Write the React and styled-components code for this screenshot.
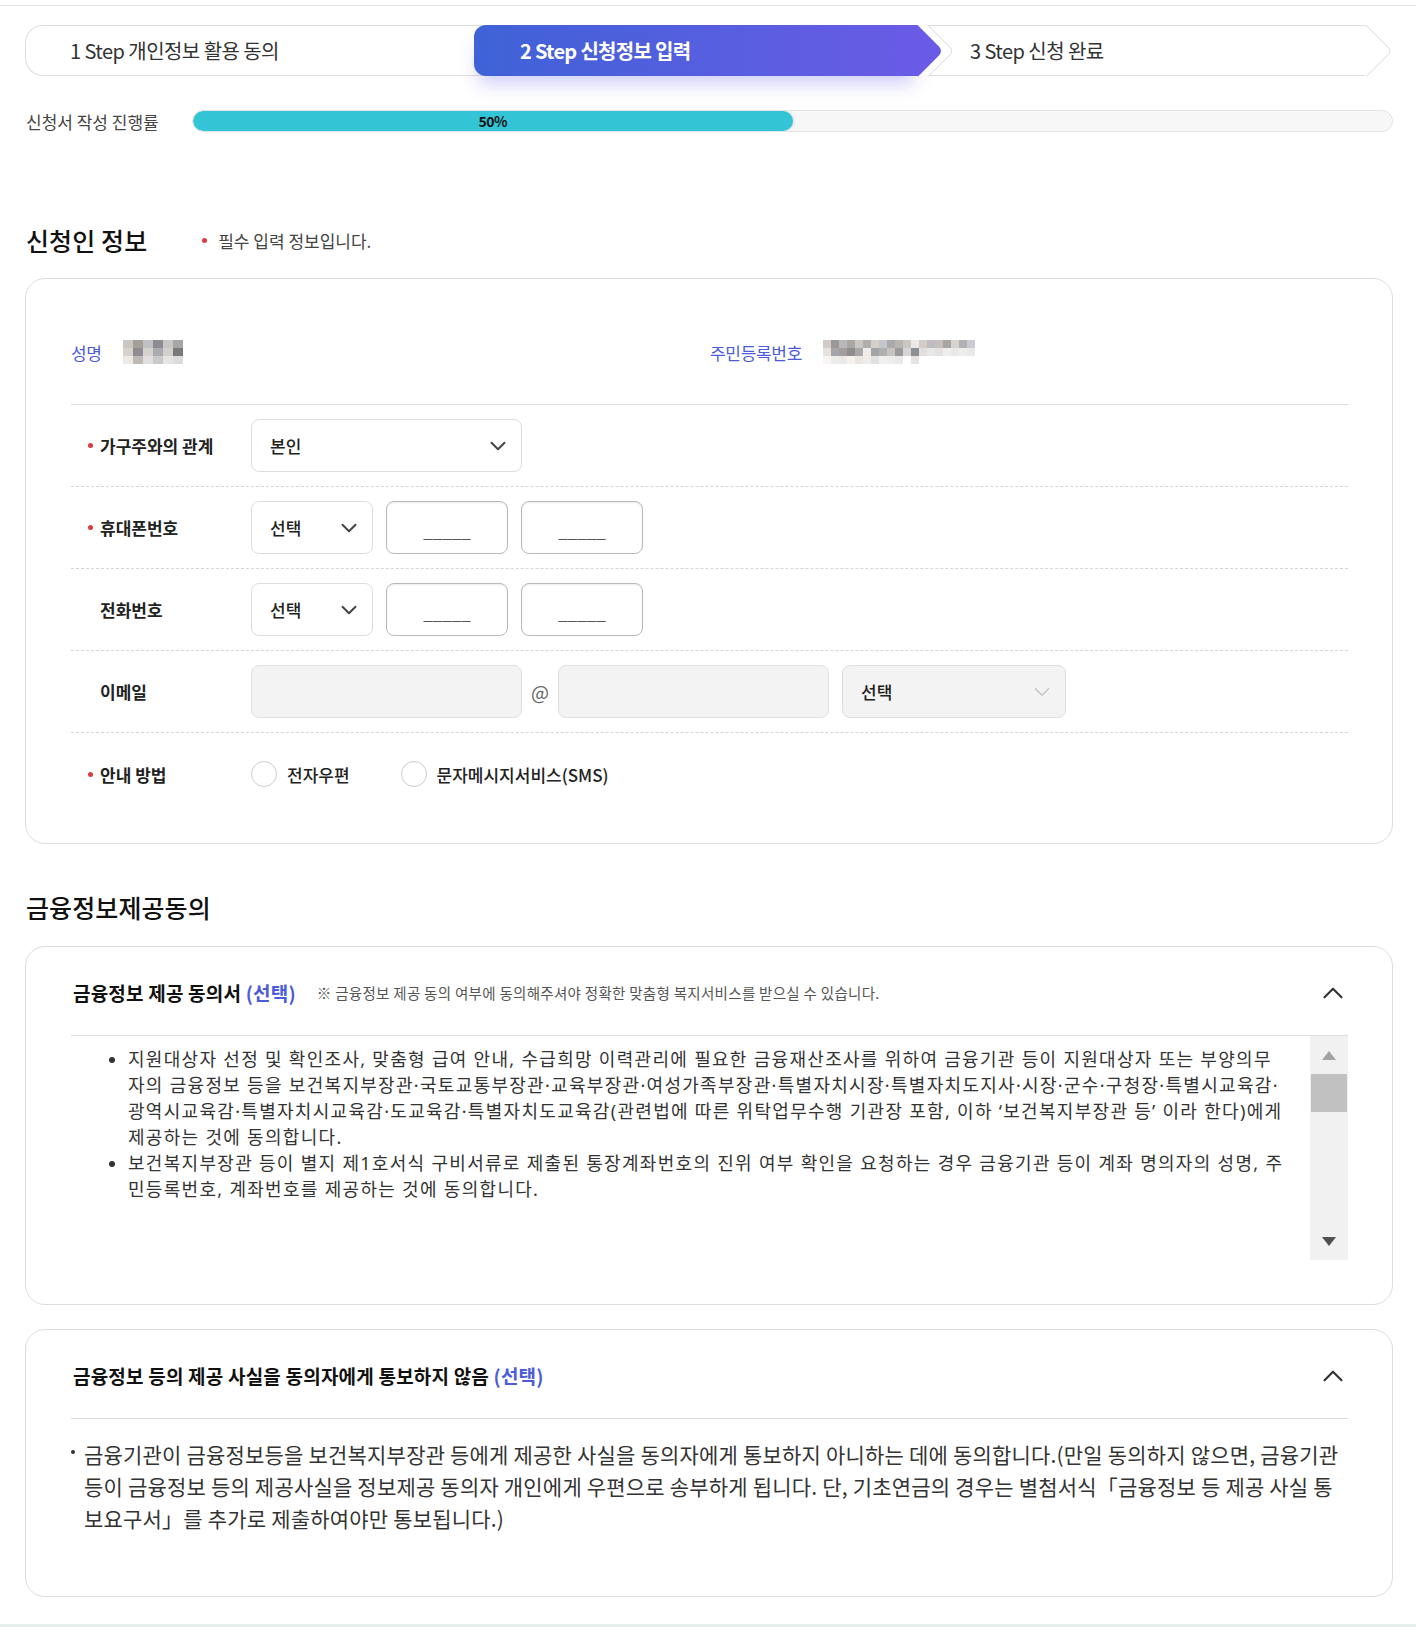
import React from 'react';
import styled, { createGlobalStyle } from 'styled-components';
import { ChevronDown, ChevronUp } from 'lucide-react';

const percent = 50;

const nameCells = [
  ['#cbc6c3', '#a59f9c', '#bfc0c2', '#8d8c90', '#c9c7c6', '#a7a5a6'],
  ['#d8d2cc', '#8f8d8f', '#d5d1cd', '#a9abb0', '#d2cfcc', '#7a7878'],
  ['#ede9e5', '#bdb9b7', '#e2e0de', '#c9c9ca', '#e6e4e2', '#dedcdb'],
];

const idCells = [
  ['#d0cbc6', '#9b9896', '#b9b8b8', '#a8a6a6', '#cbc6c1', '#b0aeae', '#d6d0c8', '#c3c6cc', '#a9a9ab', '#b8b4b0', '#c9c6c3', '#ebe8e6', '#d2ccc6', '#bcbcc2', '#c6c0ba', '#a7a5a5', '#d7d3cf', '#b3b1b2', '#c9cdd3'],
  ['#e6e2de', '#a4a6ab', '#a19e9c', '#8f8d8e', '#a9a7a8', '#efebe6', '#a2a4a8', '#b1afae', '#c7c3bf', '#9c9b9c', '#d8d5d2', '#8d8f93', '#e2dfdc', '#e9e8e8', '#e4e2e0', '#f1efee', '#ebe9e8', '#eeeeee', '#e8e8e8'],
  ['#f8f5f2', '#eeecea', '#ebe9e7', '#f3f2f1', '#e9e6e4', '#efedea', '#e2e1e2', '#f1f0ee', '#efedeb', '#e9e8e8', '#ffffff', '#e6e4e3', '#ffffff', '#ffffff', '#ffffff', '#ffffff', '#ffffff', '#ffffff', '#ffffff'],
];

const GlobalStyle = createGlobalStyle`
  * { box-sizing: border-box; }
  body {
    margin: 0;
    background: #fff;
    font-family: "Noto Sans CJK KR", "Noto Sans", sans-serif;
    color: #222;
  }
`;

const TopRule = styled.div`
  height: 6px;
  border-bottom: 1px solid #e4e4e4;
`;

const Container = styled.main`
  width: 1368px;
  margin-left: 25px;
`;

const StepBar = styled.div`
  display: flex;
  height: 51px;
  margin-top: 19px;
`;

const StepFirst = styled.div`
  flex: 0 0 465px;
  display: flex;
  align-items: center;
  padding-left: 44px;
  border: 1px solid #ddd;
  border-right: none;
  border-radius: 18px 0 0 18px;
  font-size: 20px;
  letter-spacing: -0.55px;
  color: #333;
`;

const StepActive = styled.div`
  position: relative;
  z-index: 2;
  flex: 0 0 444px;
  margin-left: -16px;
  display: flex;
  align-items: center;
  padding-left: 46px;
  border-radius: 12px 0 0 12px;
  background: linear-gradient(90deg, #3f62d7 0%, #6a5be6 100%);
  box-shadow: 0 12px 18px -4px rgba(95, 95, 230, 0.3);
  color: #fff;
  font-size: 20px;
  font-weight: 700;
  letter-spacing: -0.7px;

  &::after {
    content: '';
    position: absolute;
    right: -18px;
    top: 50%;
    width: 36px;
    height: 36px;
    background: #6a5be6;
    border-radius: 0 6px 0 0;
    transform: translateY(-50%) rotate(45deg);
  }
`;

const StepLast = styled.div`
  position: relative;
  z-index: 1;
  flex: 1;
  margin-left: 10px;
  margin-right: 26px;
  display: flex;
  align-items: center;
  padding-left: 42px;
  border-top: 1px solid #ddd;
  border-bottom: 1px solid #ddd;
  background: #fff;
  font-size: 20px;
  letter-spacing: -0.55px;
  color: #333;

  &::before,
  &::after {
    content: '';
    position: absolute;
    top: 50%;
    width: 36px;
    height: 36px;
    background: #fff;
    border-top: 1px solid #ddd;
    border-right: 1px solid #ddd;
    border-radius: 0 6px 0 0;
    transform: translateY(-50%) rotate(45deg);
  }
  &::before { left: -18px; }
  &::after { right: -18px; }
`;

const StepText = styled.span`
  position: relative;
  z-index: 1;
`;

const ProgressRow = styled.div`
  display: flex;
  align-items: center;
  margin-top: 34px;
  height: 22px;
`;

const ProgressLabel = styled.span`
  flex: 0 0 167px;
  padding-left: 1px;
  font-size: 17px;
  color: #444;
  white-space: nowrap;
`;

const ProgressTrack = styled.div`
  flex: 1;
  height: 22px;
  display: flex;
  border: 1px solid #e3e3e3;
  border-radius: 11px;
  background: #f7f7f7;
  overflow: hidden;
`;

const ProgressFill = styled.div`
  display: flex;
  align-items: center;
  justify-content: center;
  border-radius: 11px;
  background: #33c5d6;
  box-shadow: 1px 0 3px rgba(0, 0, 0, 0.12);
  font-size: 14px;
  font-weight: 700;
  letter-spacing: -0.5px;
  color: #111;
`;

const SectionHead = styled.div`
  display: flex;
  align-items: center;
  height: 34px;
  margin-top: ${(p) => p.$top}px;
`;

const SectionTitle = styled.h2`
  margin: 0;
  padding-left: 1px;
  font-size: 25px;
  font-weight: 500;
  letter-spacing: 0.1px;
  line-height: 34px;
  color: #111;
`;

const RequiredNote = styled.span`
  display: flex;
  align-items: center;
  margin-left: 55px;
  font-size: 17px;
  color: #444;
`;

const Dot = styled.i`
  flex: none;
  width: ${(p) => p.$size || 5}px;
  height: ${(p) => p.$size || 5}px;
  margin-right: ${(p) => p.$gap || 7}px;
  border-radius: 50%;
  background: ${(p) => p.$color || '#e03a3a'};
  visibility: ${(p) => (p.$hidden ? 'hidden' : 'visible')};
`;

const Card = styled.section`
  margin-top: ${(p) => p.$top}px;
  padding: ${(p) => p.$pad};
  border: 1px solid #ddd;
  border-radius: 20px;
  background: #fff;
`;

const InfoRow = styled.div`
  display: flex;
  align-items: center;
  height: 77px;
  padding-bottom: 28px;
  border-bottom: 1px solid #ddd;
`;

const InfoItem = styled.div`
  flex: 0 0 ${(p) => p.$w || 'auto'};
  display: flex;
  align-items: center;
  gap: 21px;
`;

const InfoLabel = styled.span`
  font-size: 17px;
  letter-spacing: -0.3px;
  color: #4b5bdb;
`;

const MosaicGrid = styled.div`
  display: grid;
  grid-template-columns: repeat(${(p) => p.$cols}, ${(p) => p.$w}px);
  grid-auto-rows: ${(p) => p.$h}px;
`;

const MosaicCell = styled.span`
  background: ${(p) => p.$c};
`;

const FormRow = styled.div`
  display: flex;
  align-items: center;
  height: 82px;
  border-bottom: 1px dashed #d6d6d6;

  &:last-child {
    border-bottom: none;
  }
`;

const FormLabel = styled.div`
  flex: 0 0 180px;
  display: flex;
  align-items: center;
  padding-left: 17px;
  font-size: 17px;
  font-weight: 700;
  color: #222;
`;

const Controls = styled.div`
  display: flex;
  align-items: center;
  gap: 13px;
`;

const SelectBox = styled.div`
  width: ${(p) => p.$w}px;
  height: 53px;
  display: flex;
  align-items: center;
  justify-content: space-between;
  padding: 0 10px 0 18px;
  border: 1px solid #ddd;
  border-radius: 8px;
  background: ${(p) => (p.$muted ? '#f3f3f3' : '#fff')};
  font-size: 17px;
  font-weight: 500;
  color: #222;
`;

const TextField = styled.input`
  width: 122px;
  height: 53px;
  border: 1px solid #b9b9b9;
  border-radius: 8px;
  box-shadow: inset 0 1px 2px rgba(0, 0, 0, 0.08);
  background: #fff;
  text-align: center;
  font-family: inherit;
  font-size: 17px;
  padding: 6px 0 0;
  outline: none;

  &::placeholder {
    color: #555;
  }
`;

const EmailField = styled.input`
  width: 271px;
  height: 53px;
  border: 1px solid #e0e0e0;
  border-radius: 8px;
  background: #f3f3f3;
  font-family: inherit;
  font-size: 17px;
  outline: none;
`;

const At = styled.span`
  width: 36px;
  margin: 0 -13px;
  text-align: center;
  font-size: 19px;
  color: #666;
`;

const RadioGroup = styled.label`
  display: flex;
  align-items: center;
  gap: 10px;
  margin-right: 38px;
  font-size: 17px;
  font-weight: 500;
  color: #222;
`;

const Radio = styled.input.attrs({ type: 'radio' })`
  appearance: none;
  width: 26px;
  height: 26px;
  margin: 0;
  border: 1px solid #ccc;
  border-radius: 50%;
  background: #fff;
`;

const CardHeader = styled.div`
  height: 89px;
  display: flex;
  align-items: center;
  padding: 3px 0 0 2px;
  border-bottom: 1px solid #ddd;
`;

const CardTitle = styled.h3`
  margin: 0;
  font-size: 19px;
  font-weight: 700;
  letter-spacing: 0.2px;
  color: #111;
`;

const Choice = styled.span`
  color: #4b5bdb;
`;

const CardNote = styled.span`
  margin-left: 21px;
  font-size: 14.5px;
  letter-spacing: 0.3px;
  color: #555;
`;

const Toggle = styled.span`
  display: flex;
  margin-left: auto;
  margin-right: -2px;
  color: #333;
`;

const ScrollBox = styled.div`
  display: flex;
  height: 224px;
`;

const ScrollContent = styled.div`
  flex: 1;
  overflow: hidden;
  padding: 10px 21px 0 0;
`;

const TermList = styled.ul`
  margin: 0;
  padding-left: 57px;
  font-family: "Noto Sans", "Noto Sans CJK KR", sans-serif;
  font-size: 18px;
  line-height: 26px;
  letter-spacing: 1.3px;
  color: #333;
`;

const ScrollTrack = styled.div`
  flex: 0 0 38px;
  display: flex;
  flex-direction: column;
  background: #f1f1f1;
`;

const ScrollArrow = styled.div`
  height: 38px;
  display: flex;
  align-items: center;
  justify-content: center;
`;

const ScrollThumb = styled.div`
  height: 38px;
  margin: 0 1px;
  background: #c1c1c1;
`;

const ScrollSpacer = styled.div`
  flex: 1;
`;

const Notice = styled.div`
  display: flex;
  align-items: flex-start;
  padding: 19px 0 0;
  font-size: 21px;
  line-height: 32px;
  letter-spacing: 0.2px;
  color: #333;
`;

const NoticeText = styled.p`
  margin: 0;
`;

const Footer = styled.footer`
  height: 20px;
  margin-top: 27px;
  background: #e7efec;
`;

function Mosaic({ rows, w, h }) {
  return (
    <MosaicGrid $cols={rows[0].length} $w={w} $h={h}>
      {rows.flat().map((c, i) => (
        <MosaicCell key={i} $c={c} />
      ))}
    </MosaicGrid>
  );
}

export default function App() {
  return (
    <>
      <GlobalStyle />
      <TopRule />
      <Container>
        <StepBar>
          <StepFirst>1 Step 개인정보 활용 동의</StepFirst>
          <StepActive>2 Step 신청정보 입력</StepActive>
          <StepLast>
            <StepText>3 Step 신청 완료</StepText>
          </StepLast>
        </StepBar>

        <ProgressRow>
          <ProgressLabel>신청서 작성 진행률</ProgressLabel>
          <ProgressTrack>
            <ProgressFill style={{ width: `${percent}%` }}>{percent}%</ProgressFill>
          </ProgressTrack>
        </ProgressRow>

        <SectionHead $top={91}>
          <SectionTitle>신청인 정보</SectionTitle>
          <RequiredNote>
            <Dot $gap={11} />
            필수 입력 정보입니다.
          </RequiredNote>
        </SectionHead>

        <Card $top={21} $pad="49px 44px 28px 45px">
          <InfoRow>
            <InfoItem $w="639px">
              <InfoLabel>성명</InfoLabel>
              <Mosaic rows={nameCells} w={10} h={8} />
            </InfoItem>
            <InfoItem>
              <InfoLabel>주민등록번호</InfoLabel>
              <Mosaic rows={idCells} w={8} h={8} />
            </InfoItem>
          </InfoRow>

          <FormRow>
            <FormLabel><Dot />가구주와의 관계</FormLabel>
            <Controls>
              <SelectBox $w={271}>
                본인
                <ChevronDown size={26} strokeWidth={1.8} color="#444" />
              </SelectBox>
            </Controls>
          </FormRow>

          <FormRow>
            <FormLabel><Dot />휴대폰번호</FormLabel>
            <Controls>
              <SelectBox $w={122}>
                선택
                <ChevronDown size={26} strokeWidth={1.8} color="#444" />
              </SelectBox>
              <TextField placeholder="_____" />
              <TextField placeholder="_____" />
            </Controls>
          </FormRow>

          <FormRow>
            <FormLabel><Dot $hidden />전화번호</FormLabel>
            <Controls>
              <SelectBox $w={122}>
                선택
                <ChevronDown size={26} strokeWidth={1.8} color="#444" />
              </SelectBox>
              <TextField placeholder="_____" />
              <TextField placeholder="_____" />
            </Controls>
          </FormRow>

          <FormRow>
            <FormLabel><Dot $hidden />이메일</FormLabel>
            <Controls>
              <EmailField disabled />
              <At>@</At>
              <EmailField disabled />
              <SelectBox $w={224} $muted>
                선택
                <ChevronDown size={26} strokeWidth={1.6} color="#c8c8c8" />
              </SelectBox>
            </Controls>
          </FormRow>

          <FormRow>
            <FormLabel><Dot />안내 방법</FormLabel>
            <Controls>
              <RadioGroup>
                <Radio name="notice" />
                전자우편
              </RadioGroup>
              <RadioGroup>
                <Radio name="notice" />
                문자메시지서비스(SMS)
              </RadioGroup>
            </Controls>
          </FormRow>
        </Card>

        <SectionHead $top={46}>
          <SectionTitle>금융정보제공동의</SectionTitle>
        </SectionHead>

        <Card $top={22} $pad="0 44px 44px 45px">
          <CardHeader>
            <CardTitle>
              금융정보 제공 동의서 <Choice>(선택)</Choice>
            </CardTitle>
            <CardNote>※ 금융정보 제공 동의 여부에 동의해주셔야 정확한 맞춤형 복지서비스를 받으실 수 있습니다.</CardNote>
            <Toggle>
              <ChevronUp size={34} strokeWidth={1.5} />
            </Toggle>
          </CardHeader>
          <ScrollBox>
            <ScrollContent>
              <TermList>
                <li>
                  지원대상자 선정 및 확인조사, 맞춤형 급여 안내, 수급희망 이력관리에 필요한 금융재산조사를 위하여 금융기관 등이 지원대상자 또는 부양의무자의 금융정보 등을 보건복지부장관·국토교통부장관·교육부장관·여성가족부장관·특별자치시장·특별자치도지사·시장·군수·구청장·특별시교육감·광역시교육감·특별자치시교육감·도교육감·특별자치도교육감(관련법에 따른 위탁업무수행 기관장 포함, 이하 ‘보건복지부장관 등’ 이라 한다)에게 제공하는 것에 동의합니다.
                </li>
                <li>
                  보건복지부장관 등이 별지 제1호서식 구비서류로 제출된 통장계좌번호의 진위 여부 확인을 요청하는 경우 금융기관 등이 계좌 명의자의 성명, 주민등록번호, 계좌번호를 제공하는 것에 동의합니다.
                </li>
              </TermList>
            </ScrollContent>
            <ScrollTrack>
              <ScrollArrow>
                <svg width="14" height="9" viewBox="0 0 14 9">
                  <polygon points="0,9 7,0 14,9" fill="#a3a3a3" />
                </svg>
              </ScrollArrow>
              <ScrollThumb />
              <ScrollSpacer />
              <ScrollArrow>
                <svg width="14" height="9" viewBox="0 0 14 9">
                  <polygon points="0,0 14,0 7,9" fill="#505050" />
                </svg>
              </ScrollArrow>
            </ScrollTrack>
          </ScrollBox>
        </Card>

        <Card $top={24} $pad="0 44px 62px 45px">
          <CardHeader>
            <CardTitle>
              금융정보 등의 제공 사실을 동의자에게 통보하지 않음 <Choice>(선택)</Choice>
            </CardTitle>
            <Toggle>
              <ChevronUp size={34} strokeWidth={1.5} />
            </Toggle>
          </CardHeader>
          <Notice>
            <Dot $size={4} $gap={9} $color="#333" style={{ marginTop: 12 }} />
            <NoticeText>
              금융기관이 금융정보등을 보건복지부장관 등에게 제공한 사실을 동의자에게 통보하지 아니하는 데에 동의합니다.(만일 동의하지 않으면, 금융기관 등이 금융정보 등의 제공사실을 정보제공 동의자 개인에게 우편으로 송부하게 됩니다. 단, 기초연금의 경우는 별첨서식「금융정보 등 제공 사실 통보요구서」를 추가로 제출하여야만 통보됩니다.)
            </NoticeText>
          </Notice>
        </Card>
      </Container>
      <Footer />
    </>
  );
}
